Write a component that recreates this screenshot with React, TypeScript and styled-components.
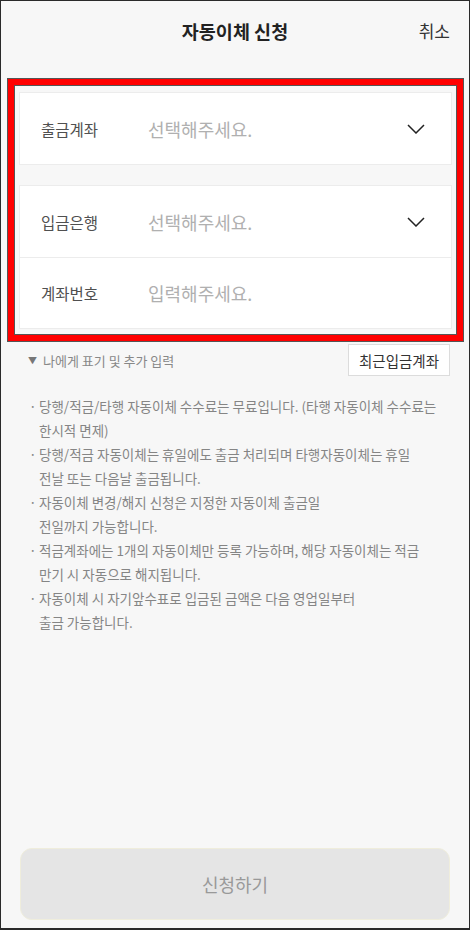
import React, { FC } from 'react';
import styled, { createGlobalStyle } from 'styled-components';

const GlobalStyle = createGlobalStyle`
  html, body {
    margin: 0;
    padding: 0;
    background: #f7f7f7;
  }
  * {
    box-sizing: border-box;
  }
  body {
    font-family: 'Noto Sans CJK KR', 'Noto Sans', sans-serif;
  }
`;

type FieldRow = {
  label: string;
  placeholder: string;
  select?: boolean;
};

const withdrawRows: FieldRow[] = [
  { label: '출금계좌', placeholder: '선택해주세요.', select: true },
];

const depositRows: FieldRow[] = [
  { label: '입금은행', placeholder: '선택해주세요.', select: true },
  { label: '계좌번호', placeholder: '입력해주세요.' },
];

const notices: string[][] = [
  ['당행/적금/타행 자동이체 수수료는 무료입니다. (타행 자동이체 수수료는', '한시적 면제)'],
  ['당행/적금 자동이체는 휴일에도 출금 처리되며 타행자동이체는 휴일', '전날 또는 다음날 출금됩니다.'],
  ['자동이체 변경/해지 신청은 지정한 자동이체 출금일', '전일까지 가능합니다.'],
  ['적금계좌에는 1개의 자동이체만 등록 가능하며, 해당 자동이체는 적금', '만기 시 자동으로 해지됩니다.'],
  ['자동이체 시 자기앞수표로 입금된 금액은 다음 영업일부터', '출금 가능합니다.'],
];

const Chevron: FC = () => (
  <svg width="18" height="10" viewBox="0 0 18 10" fill="none">
    <path d="M1 1l8 8 8-8" stroke="#222" strokeWidth="1.5" />
  </svg>
);

const FieldCard: FC<{ rows: FieldRow[] }> = ({ rows }) => (
  <Card>
    {rows.map((r) => (
      <Row key={r.label}>
        <Label>{r.label}</Label>
        <Placeholder>{r.placeholder}</Placeholder>
        {r.select && (
          <ChevronWrap>
            <Chevron />
          </ChevronWrap>
        )}
      </Row>
    ))}
  </Card>
);

const App: FC = () => {
  return (
    <>
      <GlobalStyle />
      <Screen>
        <Header>
          <Title>자동이체 신청</Title>
          <CancelButton>취소</CancelButton>
        </Header>

        <Highlight>
          <FieldCard rows={withdrawRows} />
          <FieldCard rows={depositRows} />
        </Highlight>

        <OptionBar>
          <ToggleText>
            <Caret>▼</Caret>나에게 표기 및 추가 입력
          </ToggleText>
          <RecentButton>최근입금계좌</RecentButton>
        </OptionBar>

        <NoticeList>
          {notices.map((lines, i) => (
            <NoticeItem key={i}>
              {lines.map((l, j) => (
                <NoticeLine key={j} first={j === 0}>
                  {l}
                </NoticeLine>
              ))}
            </NoticeItem>
          ))}
        </NoticeList>

        <Footer>
          <SubmitButton disabled>신청하기</SubmitButton>
        </Footer>
      </Screen>
    </>
  );
};

export default App;

const Screen = styled.div`
  display: flex;
  flex-direction: column;
  width: 470px;
  height: 930px;
  background: #f7f7f7;
  border: 1px solid #2a2a2a;
  border-bottom-width: 2px;
`;

const Header = styled.div`
  position: relative;
  display: flex;
  align-items: center;
  justify-content: center;
  height: 60px;
  margin-bottom: 18px;
`;

const Title = styled.h1`
  margin: 0;
  font-size: 18.5px;
  font-weight: 700;
  color: #222;
`;

const CancelButton = styled.button`
  position: absolute;
  right: 19px;
  top: 17px;
  padding: 0;
  border: none;
  background: none;
  font-family: inherit;
  font-size: 17px;
  color: #333;
`;

const Highlight = styled.div`
  display: flex;
  flex-direction: column;
  gap: 20px;
  margin: 0 6px 0 7px;
  padding: 7px 5px 6px;
  border: 6px solid #ff0000;
  outline: 1px solid #555;
  box-shadow: inset 0 0 0 1px #555;
`;

const Card = styled.div`
  display: flex;
  flex-direction: column;
  background: #fff;
  border: 1px solid #ececec;
`;

const Row = styled.div`
  display: flex;
  align-items: center;
  height: 71px;
  padding: 0 26px 0 21px;

  & + & {
    border-top: 1px solid #ececec;
  }
`;

const Label = styled.span`
  width: 107px;
  font-size: 15.5px;
  color: #505050;
`;

const Placeholder = styled.span`
  flex: 1;
  font-size: 18px;
  color: #b0b0b0;
`;

const ChevronWrap = styled.span`
  display: flex;
  align-items: center;
`;

const OptionBar = styled.div`
  display: flex;
  align-items: center;
  justify-content: space-between;
  padding: 1px 19px 0 27px;
  margin-top: 2px;
`;

const ToggleText = styled.span`
  display: flex;
  align-items: center;
  font-size: 13px;
  color: #888;
`;

const Caret = styled.span`
  font-size: 9px;
  margin-right: 6px;
  color: #777;
`;

const RecentButton = styled.button`
  height: 32px;
  padding: 0 10px;
  background: #fff;
  border: 1px solid #dcdcdc;
  font-family: inherit;
  font-size: 14.5px;
  color: #333;
`;

const NoticeList = styled.ul`
  list-style: none;
  margin: 18px 0 0;
  padding: 0 20px 0 28px;
`;

const NoticeItem = styled.li`
  font-size: 13.5px;
  line-height: 24px;
  color: #858585;
`;

const NoticeLine = styled.div<{ first: boolean }>`
  padding-left: 10px;
  position: relative;

  &::before {
    content: ${({ first }) => (first ? "'·'" : "''")};
    position: absolute;
    left: 0;
  }
`;

const Footer = styled.div`
  margin-top: auto;
  padding: 0 19px 8px;
`;

const SubmitButton = styled.button`
  width: 100%;
  height: 72px;
  border-radius: 12px;
  border: 1px solid #efeddc;
  background: #e5e5e5;
  font-family: inherit;
  font-size: 18px;
  color: #999;
`;
